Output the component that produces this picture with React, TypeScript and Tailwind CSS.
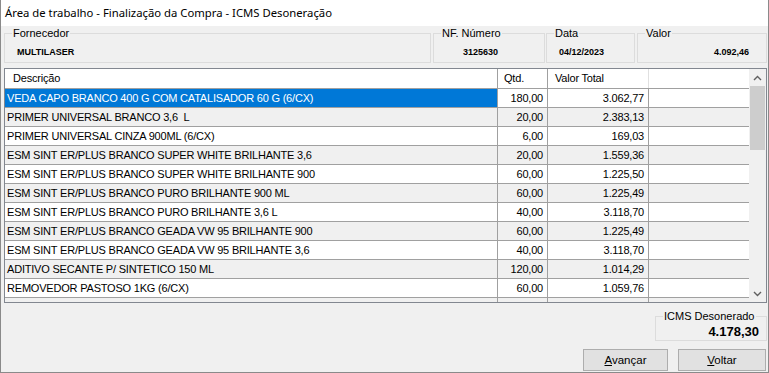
import React from "react";

const rows: [string, string, string][] = [
  ["VEDA CAPO BRANCO 400 G COM CATALISADOR 60 G (6/CX)", "180,00", "3.062,77"],
  ["PRIMER UNIVERSAL BRANCO 3,6  L", "20,00", "2.383,13"],
  ["PRIMER UNIVERSAL CINZA 900ML (6/CX)", "6,00", "169,03"],
  ["ESM SINT ER/PLUS BRANCO SUPER WHITE BRILHANTE 3,6", "20,00", "1.559,36"],
  ["ESM SINT ER/PLUS BRANCO SUPER WHITE BRILHANTE 900", "60,00", "1.225,50"],
  ["ESM SINT ER/PLUS BRANCO PURO BRILHANTE 900 ML", "60,00", "1.225,49"],
  ["ESM SINT ER/PLUS BRANCO PURO BRILHANTE 3,6 L", "40,00", "3.118,70"],
  ["ESM SINT ER/PLUS BRANCO GEADA VW 95 BRILHANTE 900", "60,00", "1.225,49"],
  ["ESM SINT ER/PLUS BRANCO GEADA VW 95 BRILHANTE 3,6", "40,00", "3.118,70"],
  ["ADITIVO SECANTE P/ SINTETICO 150 ML", "120,00", "1.014,29"],
  ["REMOVEDOR PASTOSO 1KG (6/CX)", "60,00", "1.059,76"],
  ["", "", ""],
];

function Group({
  label,
  value,
  className,
  valueClass,
}: {
  label: string;
  value: string;
  className: string;
  valueClass: string;
}) {
  return (
    <fieldset className={`border border-[#dcdcdc] h-[37px] ${className}`}>
      <legend className="ml-[7px] px-[1px] text-[11px] leading-[14px] text-[#000]">{label}</legend>
      <div className={`text-[9px] font-bold leading-[12px] text-[#000] ${valueClass}`}>{value}</div>
    </fieldset>
  );
}

export default function App() {
  return (
    <div className="w-[769px] h-[373px] bg-[#f0f0f0] border-l border-r border-b border-[#8a8a8a] flex flex-col font-['Liberation_Sans',Arial,sans-serif] overflow-hidden">
      <div className="h-[26px] bg-white flex items-center pl-[4px] text-[11.3px] text-black font-['Noto_Sans',sans-serif]">
        Área de trabalho - Finalização da Compra - ICMS Desoneração
      </div>
      <div className="flex flex-col pl-[3px] pr-[1px]">
        <div className="flex">
          <Group label="Fornecedor" value="MULTILASER" className="w-[427px]" valueClass="pl-[12px] pt-[6px]" />
          <Group label="NF. Número" value="3125630" className="w-[112px] ml-[2px]" valueClass="pl-[29px] pt-[6px]" />
          <Group label="Data" value="04/12/2023" className="w-[89px] ml-[1px]" valueClass="pl-[12px] pt-[6px]" />
          <Group label="Valor" value="4.092,46" className="w-[130px] ml-[2px]" valueClass="text-right pr-[17px] pt-[6px]" />
        </div>
        <div className="mt-[5px] h-[235px] border border-[#828790] bg-white flex text-[11px] tracking-[-0.2px] text-black">
          <div className="flex flex-col w-[744px]">
            <div className="flex h-[20px] shrink-0 border-b border-[#a0a0a0]">
              <div className="w-[493px] border-r border-[#a0a0a0] pl-[8px] leading-[19px]">Descrição</div>
              <div className="w-[50px] border-r border-[#a0a0a0] pl-[6px] leading-[19px]">Qtd.</div>
              <div className="w-[101px] border-r border-[#e0e0e0] pl-[7px] leading-[19px]">Valor Total</div>
              <div className="w-[100px]"></div>
            </div>
            <div className="flex flex-col overflow-hidden">
              {rows.map((r, i) => (
                <div
                  key={i}
                  className={`flex h-[19px] shrink-0 border-b border-[#a0a0a0] ${i % 2 === 1 ? "bg-[#f0f0f0]" : "bg-white"}`}
                >
                  <div
                    className={`w-[493px] border-r border-[#a0a0a0] pl-[2px] leading-[18px] whitespace-pre ${i === 0 ? "bg-[#0078d7] text-white" : ""}`}
                  >
                    {r[0]}
                  </div>
                  <div className={`w-[50px] border-r border-[#a0a0a0] pr-[4px] text-right leading-[18px] ${i === 0 ? "bg-white" : ""}`}>{r[1]}</div>
                  <div className={`w-[101px] border-r border-[#a0a0a0] pr-[4px] text-right leading-[18px] ${i === 0 ? "bg-white" : ""}`}>{r[2]}</div>
                  <div className={`w-[100px] ${i === 0 ? "bg-white" : ""}`}></div>
                </div>
              ))}
            </div>
          </div>
          <div className="w-[17px] bg-[#f0f0f0] flex flex-col items-center">
            <div className="h-[17px] w-full flex items-center justify-center">
              <svg width="9" height="6" viewBox="0 0 9 6">
                <path d="M1 5 L4.5 1.5 L8 5" fill="none" stroke="#606060" strokeWidth="1.4" />
              </svg>
            </div>
            <div className="w-[15px] h-[64px] bg-[#cdcdcd]"></div>
            <div className="flex-1"></div>
            <div className="h-[17px] w-full flex items-center justify-center">
              <svg width="9" height="6" viewBox="0 0 9 6">
                <path d="M1 1 L4.5 4.5 L8 1" fill="none" stroke="#606060" strokeWidth="1.4" />
              </svg>
            </div>
          </div>
        </div>
        <div className="flex justify-end mt-[6px]">
          <fieldset className="border border-[#dcdcdc] w-[112px] h-[32px]">
            <legend className="ml-[7px] px-[1px] text-[11px] leading-[14px] text-black">ICMS Desonerado</legend>
            <div className="text-right pr-[7px] text-[13px] font-bold leading-[14px] text-black mt-[2px]">4.178,30</div>
          </fieldset>
        </div>
        <div className="flex justify-end mt-[8px] gap-[10px] pr-[1px]">
          <button className="w-[85px] h-[22px] bg-[#e1e1e1] border border-[#adadad] text-[11.5px] text-black leading-[20px]">
            <span className="underline">A</span>vançar
          </button>
          <button className="w-[88px] h-[22px] bg-[#e1e1e1] border border-[#adadad] text-[11.5px] text-black leading-[20px]">
            <span className="underline">V</span>oltar
          </button>
        </div>
      </div>
    </div>
  );
}
